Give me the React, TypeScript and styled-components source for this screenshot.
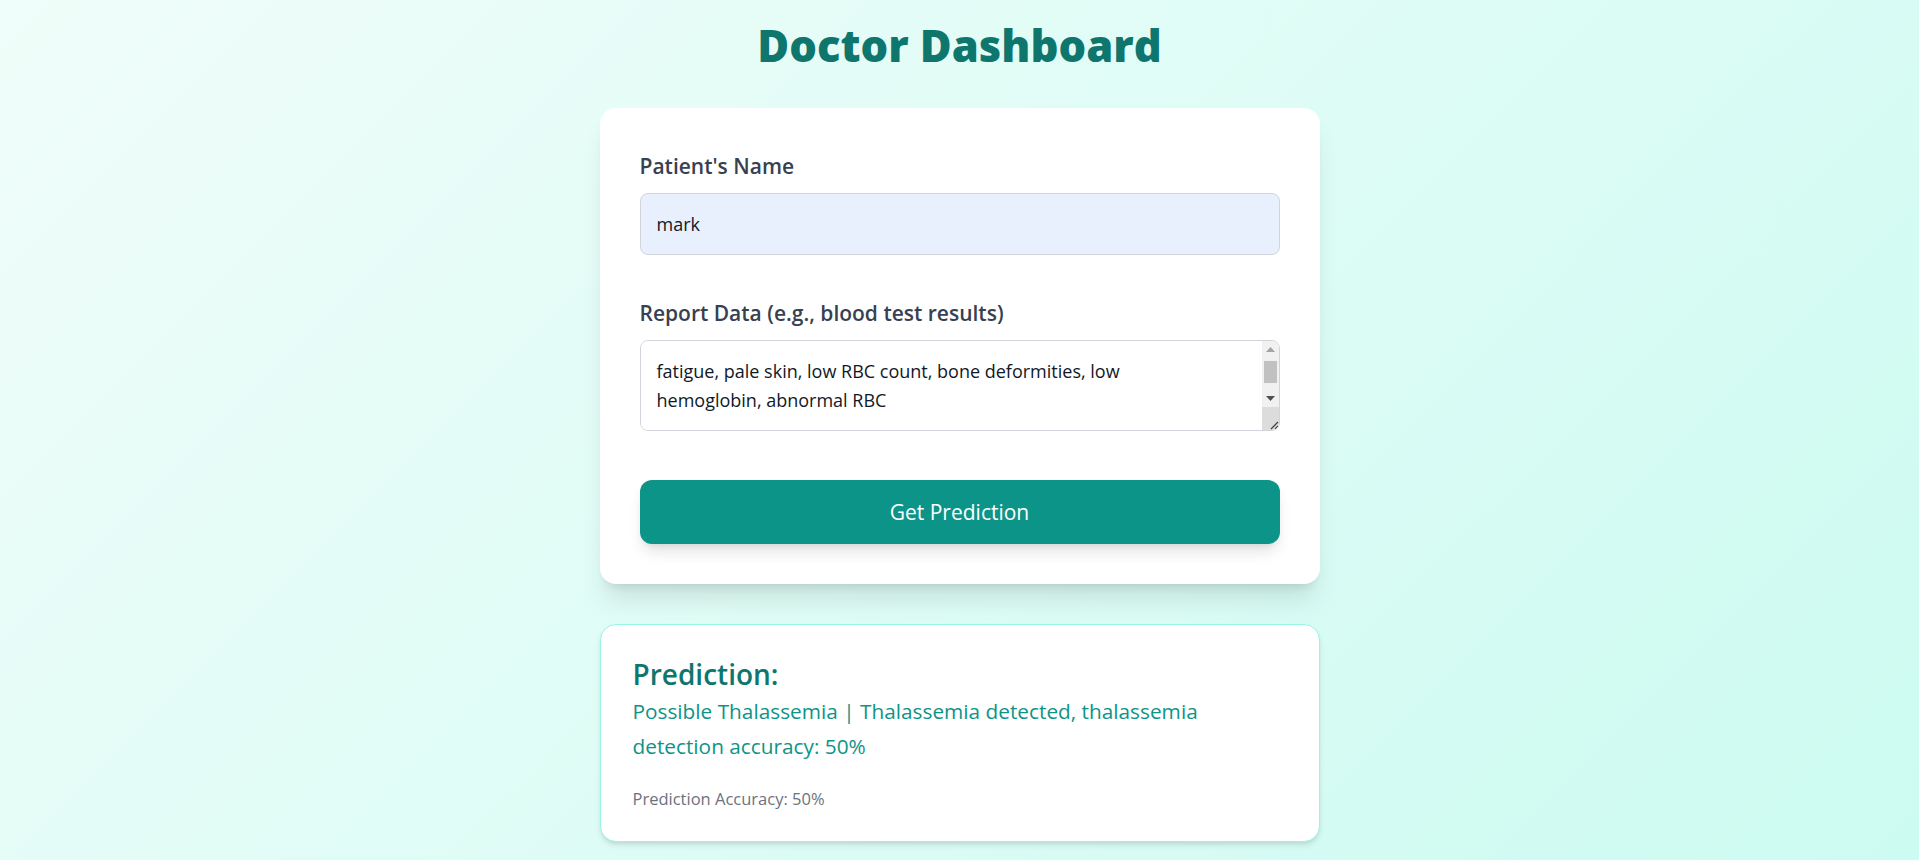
import React, { useState } from "react";
import styled, { createGlobalStyle } from "styled-components";

const GlobalStyle = createGlobalStyle`
  * { box-sizing: border-box; }
  html, body { margin: 0; padding: 0; }
  body {
    font-family: "Open Sans", "Noto Sans", sans-serif;
    background: linear-gradient(135deg, #f0fdfa 0%, #ccfbf1 100%);
    min-height: 100vh;
  }
`;

const Page = styled.div`
  min-height: 100vh;
  display: flex;
  flex-direction: column;
  align-items: center;
  padding: 22px 16px 40px;
`;

const Title = styled.h1`
  margin: 0 0 38px;
  font-size: 43.5px;
  line-height: 48px;
  font-weight: 800;
  color: #0f766e;
`;

const Card = styled.div`
  width: 720px;
  background: #fff;
  border-radius: 16px;
  padding: 40px;
  box-shadow: 0 20px 25px -5px rgba(0, 0, 0, 0.1), 0 8px 10px -6px rgba(0, 0, 0, 0.1);
`;

const Field = styled.div`
  margin-bottom: 40px;
`;

const Label = styled.label`
  display: block;
  margin-bottom: 9px;
  font-size: 21px;
  line-height: 36px;
  font-weight: 600;
  color: #374151;
`;

const Input = styled.input`
  display: block;
  width: 100%;
  height: 62px;
  padding: 16px;
  font-family: inherit;
  font-size: 18px;
  color: #111827;
  background: #e8f0fe;
  border: 1px solid #d1d5db;
  border-radius: 8px;
  outline: none;
`;

const TextAreaWrap = styled.div`
  position: relative;
`;

const TextArea = styled.textarea`
  display: block;
  width: 100%;
  height: 91px;
  padding: 16px 60px 16px 16px;
  font-family: inherit;
  font-size: 18px;
  line-height: 29px;
  color: #111827;
  background: #fff;
  border: 1px solid #d1d5db;
  border-radius: 8px;
  overflow-y: auto;
  resize: none;
  outline: none;
`;

/* classic scrollbar drawn over the textarea's right edge */
const ScrollBar = styled.div`
  position: absolute;
  top: 1px;
  right: 1px;
  bottom: 1px;
  width: 17px;
  display: flex;
  flex-direction: column;
  background: #f1f1f1;
  border-radius: 0 7px 7px 0;
  overflow: hidden;
  pointer-events: none;
`;

const ScrollArrow = styled.div`
  height: 17px;
  display: flex;
  align-items: center;
  justify-content: center;
`;

const ScrollTrack = styled.div`
  flex: 1;
  padding: 3px 2px 0;
`;

const ScrollThumb = styled.div`
  height: 22px;
  background: #c1c1c1;
`;

const Resizer = styled.div`
  height: 23px;
  background: #dcdcdc;
  display: flex;
  align-items: flex-end;
  justify-content: flex-end;
`;

const Button = styled.button`
  display: block;
  width: 100%;
  height: 64px;
  margin-top: 49px;
  border: none;
  border-radius: 12px;
  background: #0d9488;
  color: #fff;
  font-family: inherit;
  font-size: 21px;
  cursor: pointer;
  box-shadow: 0 10px 15px -3px rgba(0, 0, 0, 0.12), 0 4px 6px -4px rgba(0, 0, 0, 0.1);
`;

const ResultCard = styled.div`
  width: 720px;
  margin-top: 40px;
  background: #fff;
  border: 1px solid #99f6e4;
  border-radius: 16px;
  padding: 32px;
  box-shadow: 0 4px 6px -1px rgba(0, 0, 0, 0.1), 0 2px 4px -2px rgba(0, 0, 0, 0.1);
`;

const ResultTitle = styled.h2`
  margin: 0;
  font-size: 28px;
  line-height: 34px;
  font-weight: 600;
  color: #0f766e;
`;

const ResultText = styled.p`
  max-width: 610px;
  margin: 3px 0 0;
  font-size: 20.8px;
  line-height: 35px;
  color: #0d9488;
`;

const Accuracy = styled.p`
  margin: 25px 0 0;
  font-size: 16.5px;
  line-height: 20px;
  color: #6b7280;
`;

export default function App() {
  const [name, setName] = useState("mark");
  const [report, setReport] = useState(
    "fatigue, pale skin, low RBC count, bone deformities, low hemoglobin, abnormal RBC"
  );

  return (
    <>
      <GlobalStyle />
      <Page>
        <Title>Doctor Dashboard</Title>
        <Card>
          <Field>
            <Label>Patient's Name</Label>
            <Input value={name} onChange={(e) => setName(e.target.value)} />
          </Field>
          <Field>
            <Label>Report Data (e.g., blood test results)</Label>
            <TextAreaWrap>
              <TextArea value={report} onChange={(e) => setReport(e.target.value)} />
              <ScrollBar>
                <ScrollArrow>
                  <svg width="9" height="5" viewBox="0 0 9 5">
                    <path d="M0 5h9L4.5 0z" fill="#a3a3a3" />
                  </svg>
                </ScrollArrow>
                <ScrollTrack>
                  <ScrollThumb />
                </ScrollTrack>
                <ScrollArrow>
                  <svg width="9" height="5" viewBox="0 0 9 5">
                    <path d="M0 0h9L4.5 5z" fill="#505050" />
                  </svg>
                </ScrollArrow>
                <Resizer>
                  <svg width="10" height="10" viewBox="0 0 10 10">
                    <path d="M9 2L2 9M9 6L6 9" stroke="#3f3f3f" strokeWidth="1.2" />
                  </svg>
                </Resizer>
              </ScrollBar>
            </TextAreaWrap>
          </Field>
          <Button>Get Prediction</Button>
        </Card>
        <ResultCard>
          <ResultTitle>Prediction:</ResultTitle>
          <ResultText>
            Possible Thalassemia | Thalassemia detected, thalassemia detection accuracy: 50%
          </ResultText>
          <Accuracy>Prediction Accuracy: 50%</Accuracy>
        </ResultCard>
      </Page>
    </>
  );
}
